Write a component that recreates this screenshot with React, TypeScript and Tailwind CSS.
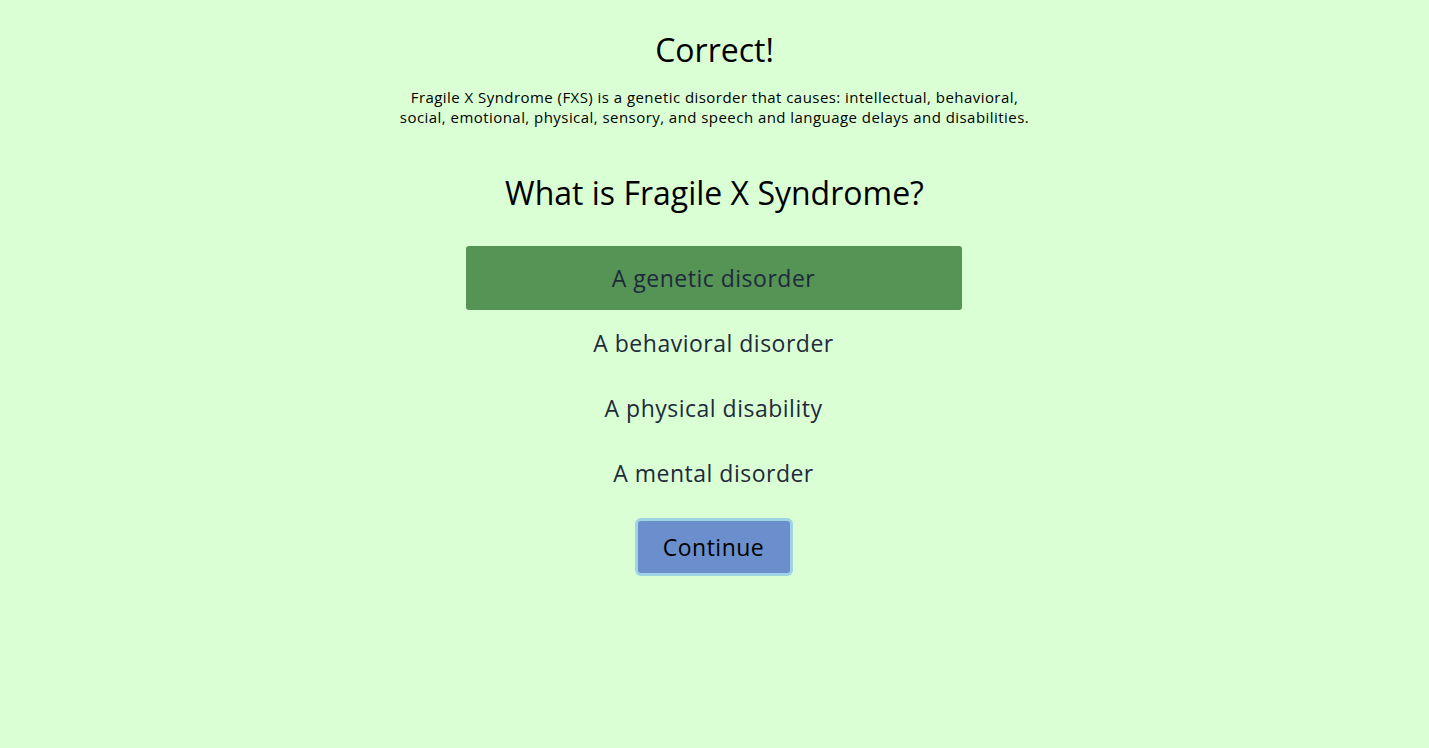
const options = [
  { label: "A genetic disorder", correct: true },
  { label: "A behavioral disorder", correct: false },
  { label: "A physical disability", correct: false },
  { label: "A mental disorder", correct: false },
];

export default function App() {
  return (
    <div
      className="min-h-[748px] w-full bg-[#dbffd4] text-black"
      style={{ fontFamily: '"Open Sans", "Liberation Sans", sans-serif' }}
    >
      <div className="mx-auto flex flex-col items-center pt-[28px]">
        <h1 className="text-[32px] leading-[44px]">Correct!</h1>
        <p className="mt-[15px] w-[634px] text-center text-[15px] leading-[20px] tracking-[0.45px]">
          Fragile X Syndrome (FXS) is a genetic disorder that causes: intellectual, behavioral,
          social, emotional, physical, sensory, and speech and language delays and disabilities.
        </p>
        <h2 className="mt-[44px] text-[32px] leading-[44px]">What is Fragile X Syndrome?</h2>

        <div className="mt-[31px] flex w-[496px] -translate-x-[1px] flex-col gap-[1px]">
          {options.map((o) => (
            <button
              key={o.label}
              className={
                "h-[64px] w-full rounded-[3px] text-[23px] tracking-[0.5px] text-[#1e2a3b] " +
                (o.correct ? "bg-[#559455]" : "bg-transparent")
              }
            >
              {o.label}
            </button>
          ))}
        </div>

        <button className="mt-[16px] h-[52px] w-[152px] -translate-x-[1px] rounded-[3px] bg-[#6a8fcc] text-[23px] tracking-[0.5px] text-black ring-3 ring-[#9fd4e4]">
          Continue
        </button>
      </div>
    </div>
  );
}
